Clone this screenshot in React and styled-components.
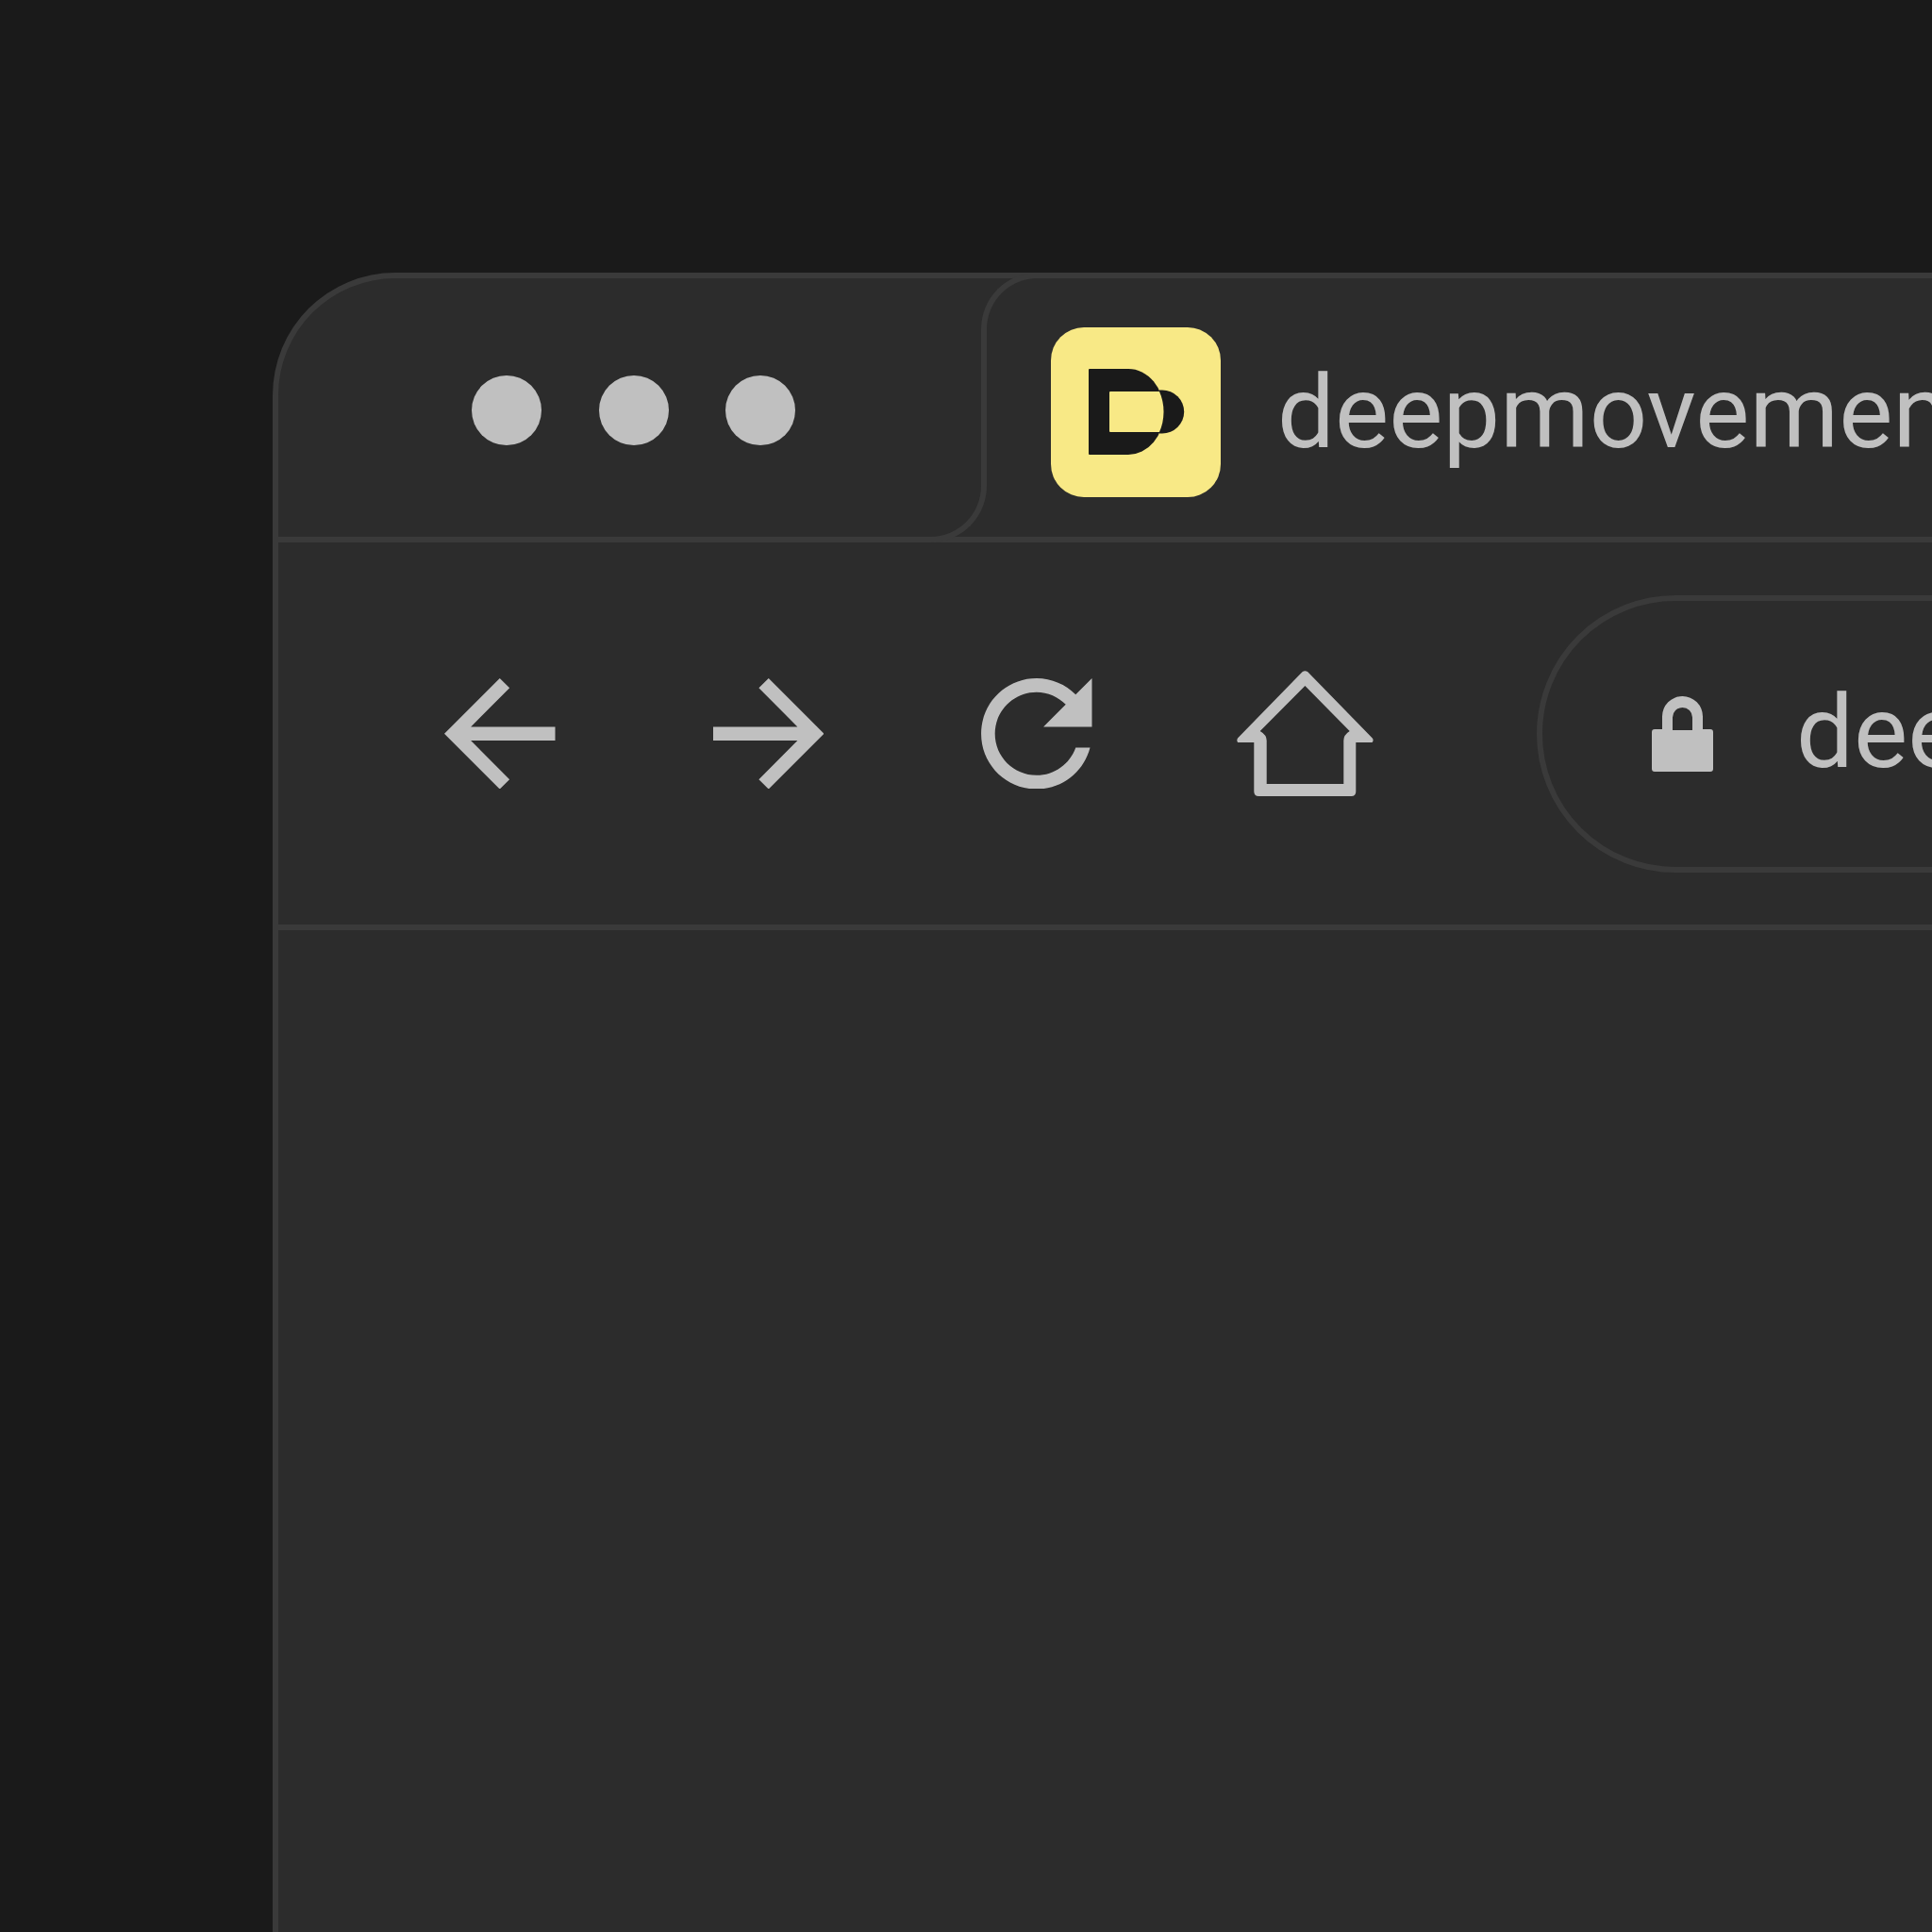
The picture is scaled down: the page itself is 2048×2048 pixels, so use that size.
import styled, { createGlobalStyle } from "styled-components"

const GlobalStyle = createGlobalStyle`
  html, body {
    margin: 0;
    height: 2048px;
    overflow: hidden;
    background: #1a1a1a;
  }
  * { box-sizing: border-box; }
`

const LINE = "#3a3a3a"
const PANEL = "#2c2c2c"
const INK = "#c0c0c0"

const Page = styled.div`
  width: 2048px;
  height: 2048px;
  padding: 289px 0 0 289px;
  overflow: hidden;
`
const Ventana = styled.div`
  width: 1900px;
  height: 1900px;
  background: ${PANEL};
  border-left: 6px solid ${LINE};
  border-top: 6px solid ${LINE};
  border-top-left-radius: 130px;
  display: flex;
  flex-direction: column;
`
const BarraTabs = styled.div`
  height: 280px;
  flex-shrink: 0;
  display: flex;
  border-bottom: 6px solid ${LINE};
`
const ZonaPuntos = styled.div`
  width: 691px;
  flex-shrink: 0;
  padding: 5px 0 0 205px;
  display: flex;
  align-items: center;
  gap: 60.5px;
`
const Punto = styled.span`
  width: 74px;
  height: 74px;
  border-radius: 50%;
  background: ${INK};
`
const BordeTab = styled.div`
  width: 114px;
  flex-shrink: 0;
  margin: -6px 0;
  display: flex;
  flex-direction: column;
`
const CurvaArriba = styled.div`
  flex: 1;
  margin-left: 54px;
  border-left: 6px solid ${LINE};
  border-top: 6px solid ${LINE};
  border-top-left-radius: 60px;
`
const CurvaAbajo = styled.div`
  flex: 1;
  margin-right: 54px;
  border-right: 6px solid ${LINE};
  border-bottom: 6px solid ${LINE};
  border-bottom-right-radius: 60px;
`
const Tab = styled.div`
  flex: 1;
  padding: 10px 0 0 14px;
  display: flex;
  align-items: center;
  gap: 60px;
`
const Logo = styled.svg`
  width: 180px;
  height: 180px;
  flex-shrink: 0;
`
const Texto = styled.span`
  font-family: Roboto, "Liberation Sans", sans-serif;
  font-size: 108px;
  line-height: 1;
  color: ${INK};
  white-space: nowrap;
  margin-bottom: ${(p) => p.$sube}px;
`
const BarraNav = styled.div`
  height: 411px;
  flex-shrink: 0;
  display: flex;
  align-items: center;
  padding-left: 176px;
  gap: 167px;
  border-bottom: 6px solid ${LINE};
`
const BotonNav = styled.div`
  width: 117.5px;
  height: 117.5px;
  flex-shrink: 0;
  display: flex;
  align-items: center;
  justify-content: center;
  svg { flex-shrink: 0; fill: ${INK}; display: block; }
`
const Direccion = styled.div`
  width: 1000px;
  height: 294px;
  flex-shrink: 0;
  margin-left: 20px;
  display: flex;
  align-items: center;
  gap: 88px;
  padding-left: 116px;
  border: 6px solid ${LINE};
  border-radius: 147px;
  svg { flex-shrink: 0; fill: ${INK}; }
`
const Contenido = styled.main`
  flex: 1;
`

const LogoD = () => (
  <Logo viewBox="0 0 180 180">
    <rect width="180" height="180" rx="35" fill="#f8e986" />
    <path fill="#1a1a1a" d="M41 44H82A38 45.5 0 0 1 82 135H41Q40 135 40 134V45Q40 44 41 44Z" />
    <path fill="#1a1a1a" d="M115 66.5H118A23 22.8 0 0 1 118 112.5H115Z" />
    <path fill="#f8e986" d="M63 68H115A38 45.5 0 0 1 115 111H63Q62 111 62 110V69Q62 68 63 68Z" />
  </Logo>
)

const App = () => {
  return (
    <>
      <GlobalStyle />
      <Page>
        <Ventana>
          <BarraTabs>
            <ZonaPuntos>
              <Punto />
              <Punto />
              <Punto />
            </ZonaPuntos>
            <BordeTab>
              <CurvaArriba />
              <CurvaAbajo />
            </BordeTab>
            <Tab>
              <LogoD />
              <Texto $sube={0}>deepmovement</Texto>
            </Tab>
          </BarraTabs>
          <BarraNav>
            <BotonNav>
              <svg width="117.5" height="117.5" viewBox="4 4 16 16">
                <path d="M20 11H7.83l5.59-5.59L12 4l-8 8 8 8 1.41-1.41L7.83 13H20v-2z" />
              </svg>
            </BotonNav>
            <BotonNav>
              <svg width="117.5" height="117.5" viewBox="4 4 16 16">
                <path d="M12 4l-1.41 1.41L16.17 11H4v2h12.17l-5.58 5.59L12 20l8-8z" />
              </svg>
            </BotonNav>
            <BotonNav>
              <svg width="117.5" height="117.5" viewBox="4 4 16 16">
                <path d="M17.65 6.35C16.2 4.9 14.21 4 12 4c-4.42 0-7.99 3.58-7.99 8s3.57 8 7.99 8c3.73 0 6.84-2.55 7.73-6h-2.08c-.82 2.33-3.04 4-5.65 4-3.31 0-6-2.69-6-6s2.69-6 6-6c1.66 0 3.14.69 4.22 1.78L13 11h7V4l-2.35 2.35z" />
              </svg>
            </BotonNav>
            <BotonNav>
              <svg width="147" height="135" viewBox="-1 -1 147 135">
                <path
                  fillRule="evenodd"
                  d="M69.5 1.2Q72.4-.8 75.3 1.2L143.8 71.5Q145.5 74 143.5 76H126.3V128Q126.3 133 121.3 133H23.3Q18.3 133 18.3 128V76H1.2Q-.5 74 1 71.5ZM72.4 16 119.7 64Q113.3 68 113.3 74V120H31.7V74Q31.7 68 24.7 64Z"
                />
              </svg>
            </BotonNav>
            <Direccion>
              <svg width="65" height="80" viewBox="0 0 65 80">
                <path d="M11 36V21.5A21.5 21.5 0 0 1 54 21.5V35H62Q65 35 65 38V77Q65 80 62 80H3Q0 80 0 77V38Q0 35 3 35H11ZM22 36H43V22.5A10.5 10.5 0 0 0 22 22.5Z" fillRule="evenodd" />
              </svg>
              <Texto $sube={4}>deepmovement</Texto>
            </Direccion>
          </BarraNav>
          <Contenido />
        </Ventana>
      </Page>
    </>
  )
}

export default App
